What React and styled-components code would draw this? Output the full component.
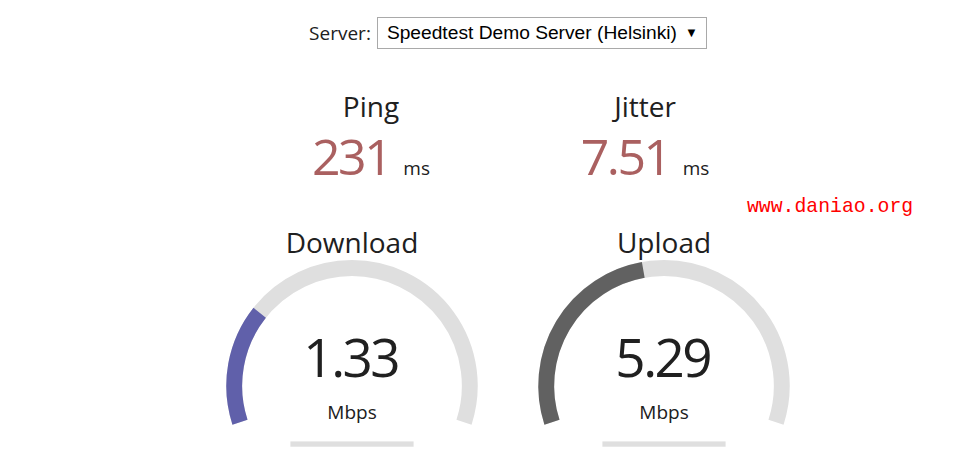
import React from "react";
import styled, { createGlobalStyle } from "styled-components";

const Global = createGlobalStyle`
  html, body { margin: 0; padding: 0; background: #ffffff; overflow: hidden; }
  body { font-family: "Open Sans", "Noto Sans", sans-serif; color: #202020; }
`;

const Page = styled.div`
  position: relative;
  width: 1016px;
  padding-top: 17px;
  display: flex;
  flex-direction: column;
  align-items: center;
`;

const ServerRow = styled.div`
  display: flex;
  align-items: center;
  gap: 6px;
  height: 32px;
`;

const ServerLabel = styled.span`
  font-size: 19px;
  line-height: 1;
  padding-top: 1px;
`;

const SelectBox = styled.div`
  box-sizing: border-box;
  width: 330px;
  height: 32px;
  border: 1px solid #a9a9a9;
  background: #fff;
  display: flex;
  align-items: center;
  justify-content: space-between;
  padding: 0 8px 0 9px;
  font-family: "Liberation Sans", Arial, sans-serif;
  font-size: 19.2px;
  color: #000;
`;

const Arrow = styled.span`
  font-size: 13px;
  line-height: 1;
  margin-top: -2px;
`;

const PingGroup = styled.div`
  display: flex;
  gap: 4px;
  margin-top: 43px;
`;

const PingArea = styled.div`
  width: 270px;
  display: flex;
  flex-direction: column;
  align-items: center;
`;

const TestName = styled.div`
  font-size: 28px;
  line-height: 1;
`;

const ValueRow = styled.div`
  display: flex;
  align-items: baseline;
  gap: 13px;
  margin-top: 11px;
`;

const PingValue = styled.span`
  font-size: 50px;
  line-height: 1;
  letter-spacing: -2.5px;
  color: #aa6060;
`;

const Unit = styled.span`
  font-size: 19px;
  line-height: 1;
`;

const GaugeGroup = styled.div`
  display: flex;
  gap: 4px;
  margin-top: 41px;
`;

const GaugeArea = styled.div`
  width: 308px;
  height: 241px;
  display: grid;
  & > * { grid-area: 1 / 1; }
`;

const GaugeSvg = styled.svg`
  width: 308px;
  height: 241px;
  display: block;
`;

const GaugeText = styled.div`
  display: flex;
  flex-direction: column;
  align-items: center;
  padding-top: 6px;
`;

const GaugeValue = styled.div`
  font-size: 53px;
  line-height: 1;
  letter-spacing: -2.5px;
  text-indent: -2.5px;
  margin-top: 74px;
`;

const GaugeUnit = styled.div`
  font-size: 19px;
  line-height: 1;
  margin-top: 20px;
`;

const Watermark = styled.div`
  position: absolute;
  left: 747px;
  top: 198px;
  font-family: "Liberation Mono", "DejaVu Sans Mono", monospace;
  font-size: 19.8px;
  line-height: 1;
  color: #ff0000;
`;

const W = 308;
const H = 240.6;
const S = H * 0.0055;
const LW = 12 * S;
const CX = W / 2;
const CY = H - 58 * S;
const R = H / 1.8 - LW;

function arcPath(a0, a1) {
  const x0 = CX + R * Math.cos(a0);
  const y0 = CY + R * Math.sin(a0);
  const x1 = CX + R * Math.cos(a1);
  const y1 = CY + R * Math.sin(a1);
  const large = a1 - a0 > Math.PI ? 1 : 0;
  return `M ${x0} ${y0} A ${R} ${R} 0 ${large} 1 ${x1} ${y1}`;
}

function mbpsToAmount(s) {
  return 1 - 1 / Math.pow(1.3, Math.sqrt(s));
}

function Gauge({ name, value, color }) {
  const amount = mbpsToAmount(parseFloat(value));
  const start = -Math.PI * 1.1;
  const end = Math.PI * 0.1;
  const fgEnd = amount * Math.PI * 1.2 - Math.PI * 1.1;
  return (
    <GaugeArea>
      <GaugeSvg viewBox={`0 0 ${W} 241`}>
        <path d={arcPath(start, end)} fill="none" stroke="#dfdfdf" strokeWidth={LW} />
        <path d={arcPath(start, fgEnd)} fill="none" stroke={color} strokeWidth={LW} />
        <rect x={W * 0.3} y={H - 16 * S} width={W * 0.4} height={4 * S} fill="#dfdfdf" />
      </GaugeSvg>
      <GaugeText>
        <TestName>{name}</TestName>
        <GaugeValue>{value}</GaugeValue>
        <GaugeUnit>Mbps</GaugeUnit>
      </GaugeText>
    </GaugeArea>
  );
}

export default function App() {
  return (
    <>
      <Global />
      <Page>
        <ServerRow>
          <ServerLabel>Server:</ServerLabel>
          <SelectBox>
            <span>Speedtest Demo Server (Helsinki)</span>
            <Arrow>▼</Arrow>
          </SelectBox>
        </ServerRow>
        <PingGroup>
          <PingArea>
            <TestName>Ping</TestName>
            <ValueRow>
              <PingValue>231</PingValue>
              <Unit>ms</Unit>
            </ValueRow>
          </PingArea>
          <PingArea>
            <TestName>Jitter</TestName>
            <ValueRow>
              <PingValue>7.51</PingValue>
              <Unit>ms</Unit>
            </ValueRow>
          </PingArea>
        </PingGroup>
        <GaugeGroup>
          <Gauge name="Download" value="1.33" color="#6060aa" />
          <Gauge name="Upload" value="5.29" color="#616161" />
        </GaugeGroup>
        <Watermark>www.daniao.org</Watermark>
      </Page>
    </>
  );
}
